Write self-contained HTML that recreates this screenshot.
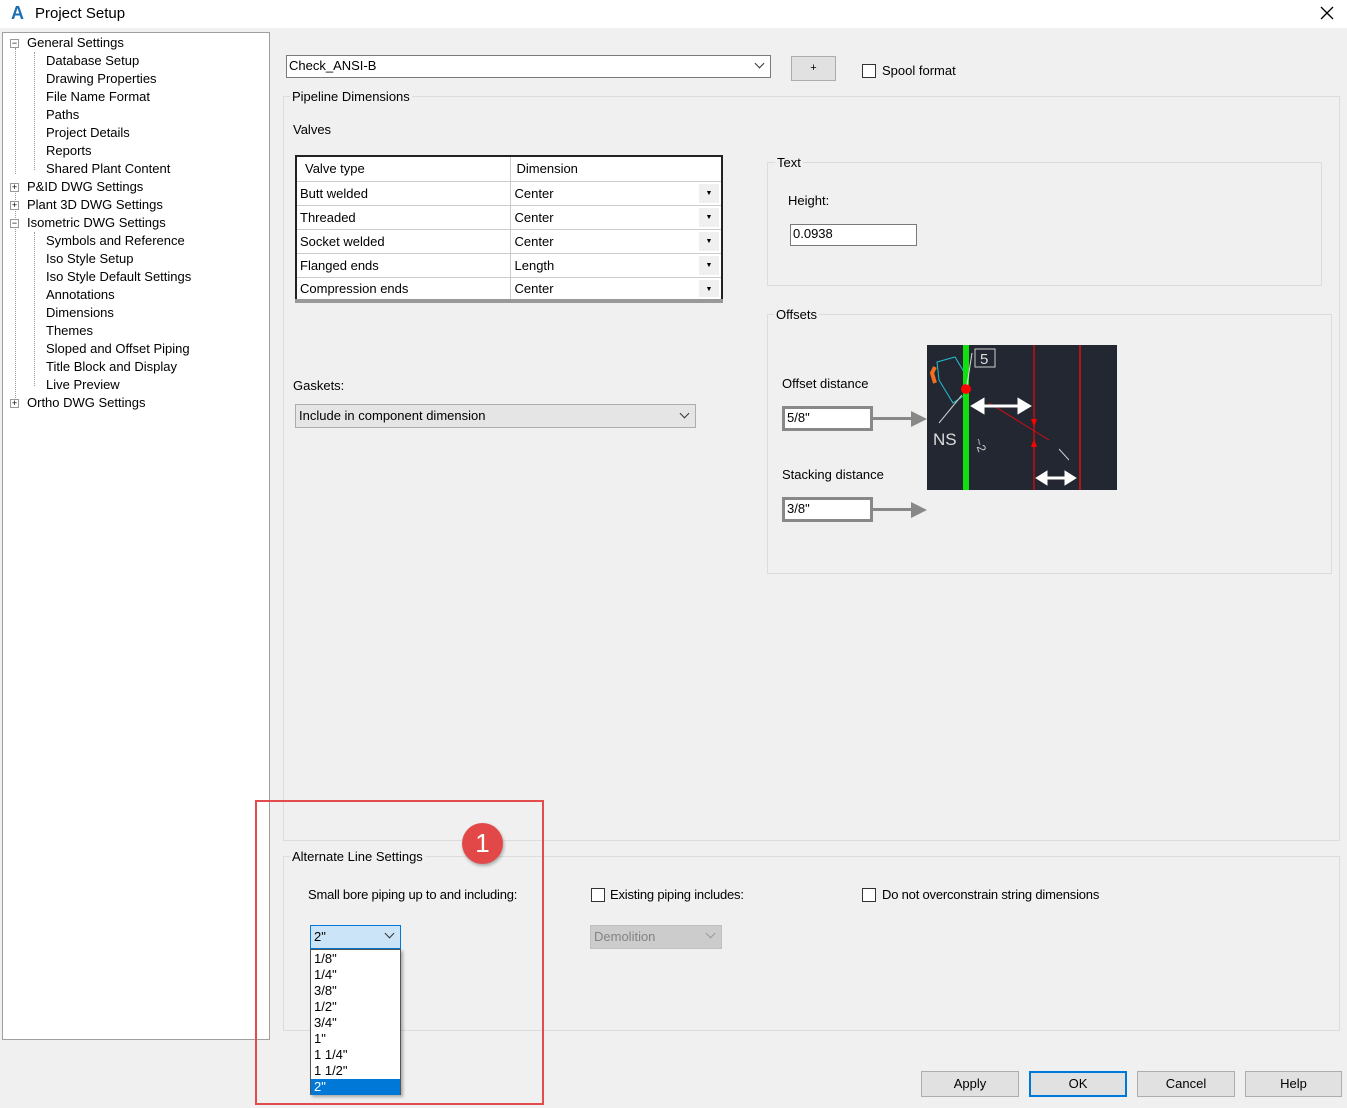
<!DOCTYPE html>
<html><head><meta charset="utf-8"><style>
*{box-sizing:border-box}
body{margin:0;width:1347px;height:1108px;background:#f0f0f0;font-family:"Liberation Sans",Arial,sans-serif;font-size:13px;color:#000;position:relative;overflow:hidden}
.a{position:absolute;white-space:nowrap}
.t{position:absolute;white-space:nowrap;line-height:16px}
.grp{position:absolute;border:1px solid #dcdcdc}
.lbl{position:absolute;background:#f0f0f0;padding:0 2px;line-height:16px}
.cb{position:absolute;width:14px;height:14px;border:1px solid #333;background:#fff}
.btn{position:absolute;background:#e1e1e1;border:1px solid #adadad;text-align:center;line-height:23px;font-size:13px}
.inp{position:absolute;background:#fff;border:1px solid #7a7a7a;line-height:18px;padding-left:2px}
.chev{position:absolute;width:7px;height:7px;border-right:1px solid #333;border-bottom:1px solid #333;transform:rotate(45deg)}
table{border-collapse:collapse}
.dd{position:absolute;right:2px;top:2px;bottom:2px;background:#f0f0f0;width:20px;text-align:center;font-size:7px;line-height:20px}
td{position:relative}
.ls{letter-spacing:-0.2px}
</style></head><body>
<div class="a" style="left:0;top:0;width:1347px;height:28px;background:#fff"></div>
<div class="a" style="left:11px;top:3px;font-weight:bold;color:#1a6fb5;font-size:18px">A</div>
<div class="a" style="left:35px;top:5px;font-size:15px">Project Setup</div>
<svg class="a" style="left:1320px;top:6px" width="14" height="14"><path d="M1 1L13 13M13 1L1 13" stroke="#000" stroke-width="1.3"/></svg>

<!-- tree -->
<div class="a" style="left:2px;top:32px;width:268px;height:1008px;background:#fff;border:1px solid #a0a0a0"></div>
<div class="a" style="left:15px;top:48px;height:126px;border-left:1px dotted #999"></div>
<div class="a" style="left:34px;top:52px;height:118px;border-left:1px dotted #999"></div>
<div class="a" style="left:15px;top:190px;height:214px;border-left:1px dotted #999"></div>
<div class="a" style="left:34px;top:232px;height:154px;border-left:1px dotted #999"></div>
<div style="position:absolute;left:10px;top:35px">
<div class="t" style="top:0;left:17px">General Settings</div>
<div class="t" style="top:18px;left:36px">Database Setup</div>
<div class="t" style="top:36px;left:36px">Drawing Properties</div>
<div class="t" style="top:54px;left:36px">File Name Format</div>
<div class="t" style="top:72px;left:36px">Paths</div>
<div class="t" style="top:90px;left:36px">Project Details</div>
<div class="t" style="top:108px;left:36px">Reports</div>
<div class="t" style="top:126px;left:36px">Shared Plant Content</div>
<div class="t" style="top:144px;left:17px">P&amp;ID DWG Settings</div>
<div class="t" style="top:162px;left:17px">Plant 3D DWG Settings</div>
<div class="t" style="top:180px;left:17px">Isometric DWG Settings</div>
<div class="t" style="top:198px;left:36px">Symbols and Reference</div>
<div class="t" style="top:216px;left:36px">Iso Style Setup</div>
<div class="t" style="top:234px;left:36px">Iso Style Default Settings</div>
<div class="t" style="top:252px;left:36px">Annotations</div>
<div class="t" style="top:270px;left:36px">Dimensions</div>
<div class="t" style="top:288px;left:36px">Themes</div>
<div class="t" style="top:306px;left:36px">Sloped and Offset Piping</div>
<div class="t" style="top:324px;left:36px">Title Block and Display</div>
<div class="t" style="top:342px;left:36px">Live Preview</div>
<div class="t" style="top:360px;left:17px">Ortho DWG Settings</div>
</div>
<div class="a" style="left:10px;top:39px;width:9px;height:9px;border:1px solid #999;background:#fff;font-size:9px;line-height:7px;text-align:center">−</div>
<div class="a" style="left:10px;top:183px;width:9px;height:9px;border:1px solid #999;background:#fff;font-size:9px;line-height:7px;text-align:center">+</div>
<div class="a" style="left:10px;top:201px;width:9px;height:9px;border:1px solid #999;background:#fff;font-size:9px;line-height:7px;text-align:center">+</div>
<div class="a" style="left:10px;top:219px;width:9px;height:9px;border:1px solid #999;background:#fff;font-size:9px;line-height:7px;text-align:center">−</div>
<div class="a" style="left:10px;top:399px;width:9px;height:9px;border:1px solid #999;background:#fff;font-size:9px;line-height:7px;text-align:center">+</div>

<!-- top row -->
<div class="inp" style="left:286px;top:55px;width:485px;height:23px;line-height:20px">Check_ANSI-B</div>
<div class="chev" style="left:756px;top:60px"></div>
<div class="btn" style="left:791px;top:56px;width:45px;height:25px;font-size:11px">+</div>
<div class="cb" style="left:862px;top:64px"></div>
<div class="t" style="left:882px;top:63px">Spool format</div>

<div class="grp" style="left:283px;top:96px;width:1057px;height:745px"></div>
<div class="lbl" style="left:290px;top:89px">Pipeline Dimensions</div>
<div class="t" style="left:293px;top:122px">Valves</div>

<table class="a" style="left:295px;top:155px;width:428px;border:2px solid #222;background:#fff">
<tr style="height:25px"><td style="padding-left:8px;border-bottom:1px solid #ccc;border-right:1px solid #ccc;width:214px">Valve type</td><td style="padding-left:6px;border-bottom:1px solid #ccc">Dimension</td></tr>
<tr style="height:24px"><td style="padding-left:3px;border-bottom:1px solid #ccc;border-right:1px solid #ccc">Butt welded</td><td style="padding-left:4px;border-bottom:1px solid #ccc">Center<span class="dd">▼</span></td></tr>
<tr style="height:24px"><td style="padding-left:3px;border-bottom:1px solid #ccc;border-right:1px solid #ccc">Threaded</td><td style="padding-left:4px;border-bottom:1px solid #ccc">Center<span class="dd">▼</span></td></tr>
<tr style="height:24px"><td style="padding-left:3px;border-bottom:1px solid #ccc;border-right:1px solid #ccc">Socket welded</td><td style="padding-left:4px;border-bottom:1px solid #ccc">Center<span class="dd">▼</span></td></tr>
<tr style="height:24px"><td style="padding-left:3px;border-bottom:1px solid #ccc;border-right:1px solid #ccc">Flanged ends</td><td style="padding-left:4px;border-bottom:1px solid #ccc">Length<span class="dd">▼</span></td></tr>
<tr style="height:24px"><td style="padding-left:3px;border-bottom:4px solid #999;border-right:1px solid #ccc">Compression ends</td><td style="padding-left:4px;border-bottom:4px solid #999">Center<span class="dd">▼</span></td></tr>
</table>

<div class="grp" style="left:767px;top:162px;width:555px;height:124px"></div>
<div class="lbl" style="left:775px;top:155px">Text</div>
<div class="t" style="left:788px;top:193px">Height:</div>
<div class="inp" style="left:790px;top:224px;width:127px;height:22px">0.0938</div>

<div class="grp" style="left:767px;top:314px;width:565px;height:260px"></div>
<div class="lbl" style="left:774px;top:307px">Offsets</div>
<div class="t" style="left:782px;top:376px">Offset distance</div>
<div class="inp" style="left:782px;top:406px;width:91px;height:25px;border:3px solid #888">5/8"</div>
<div class="a" style="left:873px;top:417px;width:40px;height:3px;background:#888"></div>
<div class="a" style="left:911px;top:411px;border-left:16px solid #888;border-top:8px solid transparent;border-bottom:8px solid transparent"></div>
<div class="t" style="left:782px;top:467px">Stacking distance</div>
<div class="inp" style="left:782px;top:497px;width:91px;height:25px;border:3px solid #888">3/8"</div>
<div class="a" style="left:873px;top:508px;width:40px;height:3px;background:#888"></div>
<div class="a" style="left:911px;top:502px;border-left:16px solid #888;border-top:8px solid transparent;border-bottom:8px solid transparent"></div>

<svg class="a" style="left:927px;top:345px" width="190" height="145" viewBox="0 0 190 145">
<rect width="190" height="145" fill="#222732"/>
<polyline points="8,22 5,28 8,38" stroke="#f07020" stroke-width="4" fill="none"/>
<polygon points="10,17 28,12 40,32 38,50 26,58 12,35" stroke="#20c0d0" fill="none"/>
<rect x="36" y="0" width="6" height="145" fill="#10e010"/>
<circle cx="39" cy="44" r="5" fill="#f00"/>
<rect x="48" y="4" width="20" height="18" stroke="#ccc" fill="none"/>
<text x="53" y="19" fill="#ddd" font-size="15" font-family="Liberation Sans">5</text>
<line x1="45" y1="8" x2="40" y2="40" stroke="#ddd"/>
<line x1="35" y1="50" x2="12" y2="78" stroke="#ccc"/>
<text x="6" y="100" fill="#ddd" font-size="17" font-family="Liberation Sans">NS</text>
<line x1="107" y1="0" x2="107" y2="145" stroke="#c01010" stroke-width="1.5"/>
<line x1="153" y1="0" x2="153" y2="145" stroke="#e01010" stroke-width="1.5"/>
<line x1="62" y1="58" x2="122" y2="95" stroke="#d01010"/>
<path d="M46 61h56M46 61l10-6v12zM102 61l-10-6v12z" stroke="#fff" stroke-width="3" fill="#fff"/>
<path d="M111 133h36M111 133l8-5v10zM147 133l-8-5v10z" stroke="#fff" stroke-width="3" fill="#fff"/>
<polygon points="104,74 110,74 107,82" fill="#f00"/><polygon points="104,102 110,102 107,94" fill="#f00"/>
<line x1="142" y1="115" x2="132" y2="104" stroke="#ccc"/>
<text x="52" y="104" fill="#ccc" font-size="12" transform="rotate(70 56 96)">~2</text>
</svg>

<div class="t" style="left:293px;top:378px">Gaskets:</div>
<div class="a" style="left:295px;top:404px;width:401px;height:24px;background:#e5e5e5;border:1px solid #adadad;line-height:22px;padding-left:3px">Include in component dimension</div>
<div class="chev" style="left:681px;top:410px"></div>

<div class="grp" style="left:283px;top:856px;width:1057px;height:175px"></div>
<div class="lbl" style="left:290px;top:849px">Alternate Line Settings</div>
<div class="t ls" style="left:308px;top:887px">Small bore piping up to and including:</div>
<div class="a" style="left:310px;top:925px;width:91px;height:24px;background:#cce4f7;border:1px solid #0078d7;line-height:22px;padding-left:3px">2"</div>
<div class="chev" style="left:386px;top:930px"></div>
<div class="a" style="left:310px;top:949px;width:91px;height:146px;background:#fff;border:1px solid #555;box-shadow:2px 2px 3px rgba(0,0,0,.3)">
<div style="line-height:16px;padding-left:3px;margin-top:1px">1/8"<br>1/4"<br>3/8"<br>1/2"<br>3/4"<br>1"<br>1 1/4"<br>1 1/2"</div>
<div style="background:#0078d7;color:#fff;line-height:16px;padding-left:3px">2"</div>
</div>
<div class="cb" style="left:591px;top:888px"></div>
<div class="t ls" style="left:610px;top:887px">Existing piping includes:</div>
<div class="a" style="left:590px;top:925px;width:132px;height:24px;background:#ccc;border:1px solid #c0c0c0;color:#838383;line-height:22px;padding-left:3px">Demolition</div>
<div class="chev" style="left:707px;top:930px;border-color:#999"></div>
<div class="cb" style="left:862px;top:888px"></div>
<div class="t ls" style="left:882px;top:887px">Do not overconstrain string dimensions</div>

<div class="a" style="left:255px;top:800px;width:289px;height:305px;border:2px solid #e34c4c"></div>
<div class="a" style="left:462px;top:823px;width:41px;height:41px;border-radius:50%;background:#e34848;color:#fff;font-size:26px;text-align:center;line-height:40px;box-shadow:1px 2px 3px rgba(0,0,0,.3)">1</div>

<div class="btn" style="left:921px;top:1071px;width:98px;height:26px">Apply</div>
<div class="btn" style="left:1029px;top:1071px;width:98px;height:26px;border:2px solid #0078d7;line-height:22px">OK</div>
<div class="btn" style="left:1137px;top:1071px;width:98px;height:26px">Cancel</div>
<div class="btn" style="left:1245px;top:1071px;width:97px;height:26px">Help</div>
</body></html>
